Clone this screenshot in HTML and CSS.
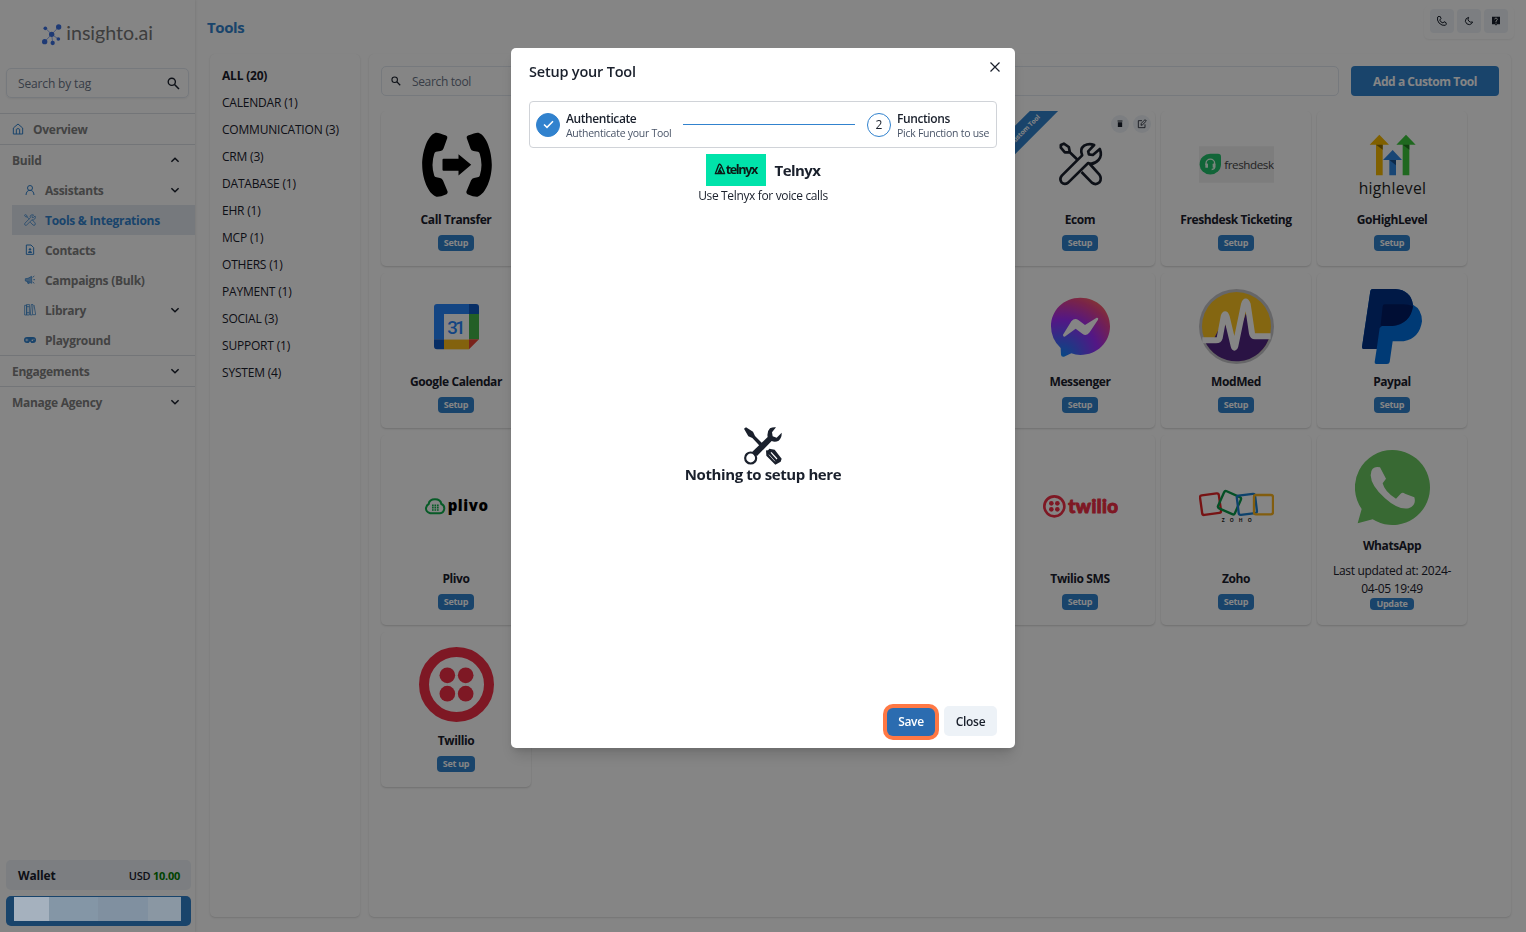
FILE: index.html
```html
<!DOCTYPE html>
<html lang="en">
<head>
<meta charset="utf-8">
<title>Tools</title>
<link rel="stylesheet" href="styles.css">
</head>
<body>
<svg class="defs" width="0" height="0" aria-hidden="true">
  <symbol id="chev" viewBox="0 0 10 10"><path d="M1.4 3.2 5 6.8 8.600 3.200" fill="none" stroke="currentColor" stroke-width="1.500"/></symbol>
  <symbol id="search" viewBox="0 0 38 38"><circle cx="14" cy="14" r="10.500" fill="none" stroke="currentColor" stroke-width="4"/><path d="M22 22 35 35" stroke="currentColor" stroke-width="4.500"/></symbol>
</svg>
<div class="app">
  <aside class="sidebar">
    <div class="logo">
      <svg width="112" height="24" viewBox="123 66 336 72">
        <path d="M136 84 155 103 176 81M155 103 134 125M155 103 158 128M155 103 175 117" fill="none" stroke="#7a9cf0" stroke-width="2.500"/>
        <g fill="#3b6fe0"><circle cx="136" cy="85" r="5.500"/><circle cx="176" cy="81" r="8"/><circle cx="155" cy="103" r="8"/><circle cx="134" cy="125" r="8"/><circle cx="158" cy="129" r="6.500"/><circle cx="175" cy="117" r="5.500"/></g>
        <text x="199" y="120" textLength="260" class="logo-text">insighto.ai</text>
      </svg>
    </div>
    <div class="field side-search"><span>Search by tag</span><svg width="13" height="13"><use href="#search"/></svg></div>
    <nav class="nav">
      <div class="row overview"><svg class="ic" width="12" height="12" viewBox="36 370 36 36"><path d="M40 385 54 373 68 385V403H40ZM49 403V390Q49 387 54 387T59 390V403" fill="none" stroke="currentColor" stroke-width="3"/></svg><span>Overview</span></div>
      <div class="group">
        <div class="row head"><span>Build</span><svg class="chev up" width="10" height="10"><use href="#chev"/></svg></div>
        <div class="row sub"><svg class="ic" width="12" height="12" viewBox="72 552 36 36"><circle cx="90" cy="564" r="7.500" fill="none" stroke="currentColor" stroke-width="3"/><path d="M78 585Q79 571 90 571T102 585" fill="none" stroke="currentColor" stroke-width="3"/></svg><span>Assistants</span><svg class="chev" width="10" height="10"><use href="#chev"/></svg></div>
        <div class="row sub active"><svg class="ic" width="12" height="12" viewBox="98 424 135 135"><use href="#toolsline" x="-45"/></svg><span>Tools &amp; Integrations</span></div>
        <div class="row sub"><svg class="ic" width="12" height="12" viewBox="72 133 36 36"><path d="M79 136H93L101 144V164H79Z" fill="none" stroke="currentColor" stroke-width="3"/><circle cx="90" cy="149" r="3.500" fill="currentColor"/><path d="M84 160Q84 154 90 154T96 160Z" fill="currentColor"/></svg><span>Contacts</span></div>
        <div class="row sub"><svg class="ic" width="12" height="12" viewBox="72 223 36 36"><path d="M76 237 84 236 95 230V251L85 246 76 244ZM81 245 84 252 88 251 86 245" fill="currentColor" fill-opacity=".6" stroke="currentColor" stroke-width="2"/><path d="M98 233 103 229M100 240H105M98 247 103 251" stroke="currentColor" stroke-width="2.500"/></svg><span>Campaigns (Bulk)</span></div>
        <div class="row sub"><svg class="ic" width="12" height="12" viewBox="72 313 36 36"><path d="M74 317H80V346H74ZM80 314H88V346H80ZM80 321H88M80 339H88M91 346 94 314 99 315 97 346ZM102 316 107 345H99" fill="none" stroke="currentColor" stroke-width="2.200"/></svg><span>Library</span><svg class="chev" width="10" height="10"><use href="#chev"/></svg></div>
        <div class="row sub"><svg class="ic" width="12" height="12" viewBox="72 402 36 36"><rect x="72" y="411" width="36" height="18" rx="9" fill="currentColor"/><path d="M76 420H85M80.500 416V424" stroke="#fff" stroke-width="2"/><path d="M86 429 90 424 94 429" fill="#fff"/><circle cx="97" cy="421" r="2.500" fill="#fff"/><circle cx="102" cy="418" r="1.500" fill="#fff"/></svg><span>Playground</span></div>
      </div>
      <div class="group"><div class="row head"><span>Engagements</span><svg class="chev" width="10" height="10"><use href="#chev"/></svg></div></div>
      <div class="row head"><span>Manage Agency</span><svg class="chev" width="10" height="10"><use href="#chev"/></svg></div>
    </nav>
    <div class="wallet"><b>Wallet</b><span class="amount">USD <em>10.00</em></span></div>
    <div class="account"><div class="blocks"><i></i><i></i><i></i><i></i></div></div>
  </aside>

  <main class="main">
    <header class="topbar">
      <h1>Tools</h1>
      <div class="actions">
        <span><svg width="10" height="10" viewBox="442 49 30 30" fill="none" stroke="#1a202c" stroke-width="3"><path d="M444 52Q448 48 452 51L454 57 450 61Q453 68 460 70L463 66 469 69Q472 74 467 77 457 79 448 70 441 61 444 52Z"/></svg></span>
        <span><svg width="10" height="10" viewBox="522 49 30 30" fill="none" stroke="#1a202c" stroke-width="3"><path d="M536 53Q526 55 526 65 529 75 538 75 545 74 548 67 540 69 536 64 532 59 536 53Z"/></svg></span>
        <span><svg width="10" height="10" viewBox="604 49 30 30"><path d="M607 51H631V74H622L619 78 616 74H607Z" fill="#1a202c"/><path d="M615 59Q616 55 619 55T623 59Q623 62 619 64V67M619 69V72" fill="none" stroke="#fff" stroke-width="2.500"/></svg></span>
      </div>
    </header>
    <div class="content">
      <section class="panel cats">
        <div class="on">ALL (20)</div><div>CALENDAR (1)</div><div>COMMUNICATION (3)</div><div>CRM (3)</div><div>DATABASE (1)</div><div>EHR (1)</div><div>MCP (1)</div><div>OTHERS (1)</div><div>PAYMENT (1)</div><div>SOCIAL (3)</div><div>SUPPORT (1)</div><div>SYSTEM (4)</div>
      </section>
      <section class="panel tools">
        <div class="bar"><div class="field tool-search"><svg width="10" height="10"><use href="#search"/></svg><span>Search tool</span></div><div class="add">Add a Custom Tool</div></div>
        <div class="grid">
          <div class="card"><div class="pic"><svg width="75" height="75" viewBox="0 0 75 75"><g id="handset"><path d="M16.500 5.800Q19 5.200 27 8.600 28.700 9.300 28.300 11L24.500 21.500Q23.800 23.600 21.500 24L17 24.800Q15.600 25 15.200 27 11.800 38 15.200 48.500 15.500 50 17.500 50.300L21 51Q23 51.400 24 53.500L28.600 64.500Q29 66.400 27.500 67.200 21 70 17.500 69.700C9 67 3.200 51 3.200 37.800S8.500 8.500 16.500 5.800Z"/></g><use href="#handset" transform="translate(76 0) scale(-1 1)"/><path d="M24.500 31.800H39.500V27.200L52.200 37.800 39.500 48.500V43.800H24.500Q23.500 43.800 23.500 42.800V32.800Q23.500 31.800 24.500 31.800Z"/></svg></div><h3>Call Transfer</h3><span class="badge">Setup</span></div>
          <div class="card"></div><div class="card"></div><div class="card"></div>
          <div class="card custom"><div class="ribbon">Custom Tool</div><div class="tiny"><span><svg width="8" height="8" viewBox="316 358 24 26"><path d="M320 360H336V363H320ZM321 365H335V381H321Z" fill="#1a202c"/></svg></span><span><svg width="10" height="10" viewBox="382 356 30 30" fill="none" stroke="#1a202c" stroke-width="2.500"><path d="M397 361H386V382H406V372M394 375 395 369 406 358 410 362 399 373Z"/></svg></span></div>
            <div class="pic"><svg width="75" height="75" viewBox="97.500 381 225 225"><g id="toolsline" fill="none" stroke="currentColor" stroke-width="8" stroke-linejoin="round"><path d="M151 435 160 431 175 441 178 457 163 457 151 443ZM177 456 202 480"/><path d="M215 466Q207 447 221 437 235 429 251 435L233 454 235 463 247 465 268 447Q276 467 264 480 249 496 233 489L173 548Q162 556 153 547 146 537 154 527Z"/><path d="M238 492 266 523Q275 536 267 547 256 557 244 548L213 516"/></g></svg></div><h3>Ecom</h3><span class="badge">Setup</span></div>
          <div class="card"><div class="pic"><svg width="75" height="37" viewBox="567 438 225 110"><path d="M567 438H792V548H567Z" fill="#f0f0f0"/><path d="M601 461H624Q633 461 633 470V492A32 31 0 1 1 601 461Z" fill="#22c16b"/><path d="M588 494V490A13 13 0 0 1 614 490V500Q614 508 605 508" fill="none" stroke="#e8fff0" stroke-width="4"/><rect x="586" y="490" width="8" height="13" rx="2" fill="#e8fff0"/><rect x="608" y="490" width="8" height="13" rx="2" fill="#e8fff0"/><text x="643" y="506" textLength="149" class="fresh">freshdesk</text></svg></div><h3>Freshdesk Ticketing</h3><span class="badge">Setup</span></div>
          <div class="card"><div class="pic"><svg width="75" height="75" viewBox="195 381 225 225"><path d="M268 404 297 434H278V526H258V434H239Z" fill="#f5b800"/><path d="M348 404 377 434H358V526H338V434H319Z" fill="#3cc83c"/><path d="M308 450 336 480H318V526H298V480H279Z" fill="#2f86e0"/><path d="M258 434H278V449Z" fill="#8b6a00"/><path d="M338 434H358V449Z" fill="#207a20"/><path d="M298 480H318V496Z" fill="#174f8c"/><text x="206" y="583" textLength="202" class="ghl">highlevel</text></svg></div><h3>GoHighLevel</h3><span class="badge">Setup</span></div>

          <div class="card"><div class="pic"><svg width="75" height="75" viewBox="147 56 225 225"><path d="M201 101H297V131H222V207H192V110Q192 101 201 101Z" fill="#2684fc"/><path d="M297 101H318Q327 101 327 110V131H297ZM192 207H222V237H201Q192 237 192 228Z" fill="#0e58c4"/><path d="M297 131H327V207H297Z" fill="#43b649"/><path d="M222 207H297V237H222Z" fill="#fbbc1c"/><path d="M297 207H327L297 237Z" fill="#ea4335"/><path d="M222 131H297V207H222Z" fill="#fff"/><text x="232" y="190" textLength="55" class="gcal">31</text></svg></div><h3>Google Calendar</h3><span class="badge">Setup</span></div>
          <div class="card"></div><div class="card"></div><div class="card"></div>
          <div class="card"><div class="pic"><svg width="75" height="75" viewBox="99 57 225 225"><defs><radialGradient id="mg" cx=".18" cy="1" r="1.150"><stop offset="0" stop-color="#0a8cff"/><stop offset=".55" stop-color="#a02cff"/><stop offset=".85" stop-color="#e8448c"/><stop offset="1" stop-color="#ff6a60"/></radialGradient></defs><path d="M211 83C262 83 300 121 300 169S262 255 211 255Q196 255 184 250L162 260Q154 262 153 254L152 234Q123 208 123 169C123 121 161 83 211 83Z" fill="url(#mg)"/><path d="M159 194 184 154Q194 142 206 151L225 165 260 143Q267 142 264 149L239 187Q229 200 217 191L197 176 164 200Q158 200 159 194Z" fill="#fff"/></svg></div><h3>Messenger</h3><span class="badge">Setup</span></div>
          <div class="card"><div class="pic"><svg width="75" height="75" viewBox="567 57 225 225"><circle cx="679.500" cy="169.500" r="112.500" fill="#c4c4c8"/><circle cx="679.500" cy="169.500" r="103.500" fill="#fdc421"/><path d="M583 210H610L640 150 672 225 708 130 730 195H780A104 104 0 0 1 583 210Z" fill="#512583"/><path d="M577 211H618Q627 211 629 204L641 140Q645 126 650 140L671 228Q673 238 676 228L702 103Q707 86 713 103L726 190Q728 199 735 199H782" fill="none" stroke="#fff" stroke-width="18"/></svg></div><h3>ModMed</h3><span class="badge">Setup</span></div>
          <div class="card"><div class="pic"><svg width="75" height="75" viewBox="1035 57 225 225"><path d="M1088 57H1156Q1202 60 1209 104 1236 118 1236 154 1229 205 1181 214H1148L1139 276Q1138 282 1131 282H1099Q1093 282 1094 276L1100 237H1061Q1056 237 1056 231L1081 63Q1082 57 1088 57Z" fill="#0070e0"/><path d="M1088 57H1156Q1202 60 1209 104 1201 163 1146 168H1116L1109 174 1100 237H1061Q1056 237 1056 231L1081 63Q1082 57 1088 57Z" fill="#003087"/><path d="M1124 103H1180Q1196 103 1209 109 1203 160 1147 168H1117Q1111 168 1112 164L1118 109Q1119 103 1124 103Z" fill="#001c64"/></svg></div><h3>Paypal</h3><span class="badge">Setup</span></div>

          <div class="card"><div class="pic"><svg width="75" height="75" viewBox="147 -7 225 225"><path d="M179 125Q167 121 168 110 170 101 176 98 178 84 195 84T214 98Q223 101 223 112 221 125 210 126H181Z" fill="none" stroke="#0fae4c" stroke-width="6"/><path d="M186 102H206M186 109H206M186 116H206" stroke="#0fae4c" stroke-width="5" stroke-dasharray="5 2.500"/><text x="233" y="118" textLength="121" class="plivo">plivo</text></svg></div><h3>Plivo</h3><span class="badge">Setup</span></div>
          <div class="card"></div><div class="card"></div><div class="card"></div>
          <div class="card"><div class="pic"><svg width="75" height="75" viewBox="99 99 225 225"><circle cx="133" cy="211" r="30" fill="none" stroke="#f22f46" stroke-width="8"/><g fill="#f22f46"><circle cx="124" cy="202" r="7"/><circle cx="142" cy="202" r="7"/><circle cx="124" cy="220" r="7"/><circle cx="142" cy="220" r="7"/><text x="175" y="232" textLength="149" class="twl">twilio</text></g></svg></div><h3>Twilio SMS</h3><span class="badge">Setup</span></div>
          <div class="card"><div class="pic"><svg width="75" height="75" viewBox="567 99 225 225"><g fill="none" stroke-width="7"><rect x="573" y="175" width="57" height="59" rx="6" stroke="#e42527" transform="rotate(-8 601 204)"/><rect x="631" y="172" width="55" height="56" rx="6" stroke="#089949" transform="rotate(24 658 200)"/><rect x="683" y="176" width="55" height="58" rx="6" stroke="#1b7fd0" transform="rotate(-7 711 204)"/><rect x="732" y="177" width="57" height="58" rx="6" stroke="#f9b21d"/></g><text x="635" y="257" textLength="90" class="zoho">ZOHO</text></svg></div><h3>Zoho</h3><span class="badge">Setup</span></div>
          <div class="card wa"><div class="pic"><svg width="75" height="75" viewBox="1035 42 225 225"><path d="M1147 42A112.500 112.500 0 1 1 1088 250L1043 262 1055 219A112.500 112.500 0 0 1 1147 42Z" fill="#6bc962"/><path d="M1088 98Q1096 90 1110 94L1128 128 1118 142Q1124 168 1158 188L1172 173Q1178 168 1185 173L1213 184Q1220 208 1196 217 1165 223 1125 187 1083 150 1082 118 1082 104 1088 98Z" fill="#fff"/></svg></div><h3>WhatsApp</h3><p>Last updated at: 2024-<br>04-05 19:49</p><span class="badge">Update</span></div>

          <div class="card last"><div class="pic"><svg width="75" height="75" viewBox="147 528 225 225"><circle cx="259.500" cy="640.500" r="97.500" fill="none" stroke="#f22f46" stroke-width="30"/><g fill="#f22f46"><circle cx="232" cy="613" r="23.500"/><circle cx="287" cy="613" r="23.500"/><circle cx="232" cy="668" r="23.500"/><circle cx="287" cy="668" r="23.500"/></g></svg></div><h3>Twillio</h3><span class="badge">Set up</span></div>
        </div>
      </section>
    </div>
  </main>
</div>

<div class="overlay">
  <div class="modal">
    <div class="mhead"><h2>Setup your Tool</h2><svg width="10" height="10" viewBox="0 0 10 10"><path d="M.5 .5 9.500 9.500M9.500 .5 .5 9.500" stroke="#1a202c" stroke-width="1.200"/></svg></div>
    <div class="stepper">
      <div class="circle done"><svg width="11" height="9" viewBox="0 0 11 9"><path d="M1 4.500 4 7.400 10 1.300" fill="none" stroke="#fff" stroke-width="1.500"/></svg></div>
      <div class="step"><b>Authenticate</b><span>Authenticate your Tool</span></div>
      <div class="line"></div>
      <div class="circle">2</div>
      <div class="step two"><b>Functions</b><span>Pick Function to use</span></div>
    </div>
    <div class="tool"><svg width="60" height="32" viewBox="138 312 180 96"><path d="M138 312H318V408H138Z" fill="#00e3aa"/><path d="M166 371 176 345Q179 340 183 346L194 371ZM173 371 182 352M180 371V360L187 371" fill="none" stroke="#0b1a16" stroke-width="4" stroke-linejoin="round"/><text x="197" y="371" textLength="98" class="tel">telnyx</text></svg><h4>Telnyx</h4></div>
    <p class="desc">Use Telnyx for voice calls</p>
    <div class="empty"><svg width="38" height="38" viewBox="252 50 114 114"><path d="M252 55 258 51 279 64 285 77 316 108 308 116 277 83 265 78Z" fill="#1a202c"/><circle cx="272" cy="143" r="16.500" fill="none" stroke="#1a202c" stroke-width="6.500"/><path d="M277 124 323 80Q320 64 330 54 338 50 348 51L336 66 338 78 350 82 365 67Q366 83 356 91 345 97 335 92L291 137Z" fill="#1a202c"/><path d="M318 120Q325 122 328 115L344 118 365 145 362 154 346 163 319 136Z" fill="#1a202c"/><path d="M333 126 351 146" stroke="#fff" stroke-width="3.500"/><path d="M327 133 345 153" stroke="#fff" stroke-width="2"/></svg><strong>Nothing to setup here</strong></div>
    <div class="foot"><div class="save">Save</div><div class="close">Close</div></div>
  </div>
</div>
</body>
</html>
```
FILE: styles.css
```css
* { box-sizing: border-box; }
body { margin: 0; width: 1526px; height: 932px; overflow: hidden; background: #fff; color: #1a202c; font: 12px/18px "Open Sans", "Noto Sans", sans-serif; letter-spacing: -.1px; }
h1, h2, h3, h4, p { margin: 0; }
svg { display: block; flex: none; }
.defs { position: absolute; }
.app { display: flex; height: 932px; }

.sidebar { width: 195px; flex: none; display: flex; flex-direction: column; box-shadow: 0 0 3px rgba(0,0,0,.15); }
.logo { padding: 22px 0 0 41px; height: 68px; }
.logo-text { font: 400 59px Lato, sans-serif; fill: #777; letter-spacing: 0; }
.field { display: flex; align-items: center; height: 30px; border: 1px solid #e2e8f0; border-radius: 5px; color: #6b7587; }
.field span { padding-top: 2px; }
.side-search { margin: 0 6px; width: 183px; padding: 0 8px 0 11px; justify-content: space-between; box-shadow: 0 1px 2px rgba(0,0,0,.06); letter-spacing: -.15px; }
.side-search svg, .tool-search svg { color: #1a202c; }
.nav { margin-top: 15px; font-weight: 700; color: #808080; letter-spacing: -.28px; }
.nav span { padding-top: 2px; }
.row { display: flex; align-items: center; height: 30px; }
.overview { border-top: 1px solid #dde1e6; height: 31px; padding-left: 12px; gap: 9px; }
.ic { color: #3182ce; }
.head { padding: 0 15px 0 12px; justify-content: space-between; }
.group { border-top: 1px solid #dde1e6; border-bottom: 1px solid #dde1e6; }
.group + .group { border-top: 0; }
.sub { margin-left: 12px; padding: 0 15px 0 12px; gap: 9px; }
.sub .chev { margin-left: auto; }
.chev { color: #1a202c; }
.chev.up { transform: rotate(180deg); }
.active { background: #e2e8f0; color: #3182ce; }
.wallet { margin: auto 4px 6px 6px; height: 30px; flex: none; border-radius: 5px; background: #edf2f7; display: flex; align-items: center; justify-content: space-between; padding: 1px 11px 0 12px; letter-spacing: -.15px; }
.amount { font-size: 11px; font-weight: 600; letter-spacing: -.25px; }
.amount em { font-style: normal; font-weight: 700; color: #008000; }
.account { margin: 0 4px 6px 6px; height: 30px; flex: none; background: #3182ce; border-radius: 5px; padding: 1px 8px; }
.blocks { position: relative; z-index: 20; display: grid; grid-template-columns: 35px 49px 50px 33px; height: 24px; }
.blocks i { background: #8496a6; }
.blocks i:nth-child(1) { background: #a5b1be; }
.blocks i:nth-child(3) { background: #8090a0; }
.blocks i:nth-child(4) { background: #8a97a3; }

.main { flex: 1; padding: 6px 12px 0 12px; }
.topbar { display: flex; justify-content: space-between; height: 48px; }
h1 { margin-top: 9px; font-size: 15px; line-height: 24px; color: #3182ce; letter-spacing: -.4px; }
.actions { display: flex; gap: 3px; height: 33px; padding: 3px 6px; border-radius: 5px; box-shadow: 0 1px 2px rgba(0,0,0,.06); }
.actions span { width: 24px; height: 24px; border-radius: 4px; background: #edf2f7; display: grid; place-items: center; }
.content { display: flex; gap: 9px; padding-left: 3px; }
.panel { height: 863px; border-radius: 5px; box-shadow: 0 1px 2px rgba(0,0,0,.13), 0 0 1px rgba(0,0,0,.06); }
.cats { width: 150px; padding: 8px 12px; line-height: 27px; letter-spacing: -.2px; white-space: nowrap; }
.on { font-weight: 700; }
.tools { width: 1142px; padding: 12px; }
.bar { display: flex; gap: 12px; margin-bottom: 15px; }
.tool-search { width: 958px; padding-left: 9px; gap: 11px; letter-spacing: -.35px; }
.add { width: 148px; height: 30px; padding-top: 2px; border-radius: 4px; background: #3182ce; color: #fff; display: grid; place-items: center; font-weight: 700; letter-spacing: -.45px; }
.grid { display: grid; grid-template-columns: repeat(7, 150px); grid-template-rows: 155px 155px 190px 155px; gap: 7px 6px; }
.card { position: relative; display: flex; flex-direction: column; align-items: center; padding: 8px 0 15px; border-radius: 5px; box-shadow: 0 1px 2px rgba(0,0,0,.17); clip-path: inset(0 -1px -3px -1px); }
.pic { flex: 1; display: grid; place-items: center; }
h3 { font-size: 12px; line-height: 20px; font-weight: 700; letter-spacing: -.4px; }
.badge { margin-top: 5px; height: 16px; line-height: 16px; padding: 0 6px; border-radius: 4px; background: #3182ce; color: #fff; font-size: 9px; font-weight: 700; letter-spacing: -.3px; }
.custom { clip-path: inset(0 -1px -3px 0); }
.ribbon { position: absolute; left: -40px; top: 9px; width: 120px; height: 20px; transform: rotate(-45deg); background: #3182ce; color: #fff; text-align: center; font-size: 6.5px; line-height: 20px; font-weight: 700; }
.tiny { position: absolute; right: 4px; top: 4px; display: flex; gap: 4px; }
.tiny span { width: 18px; height: 18px; border-radius: 50%; background: #edf2f7; display: grid; place-items: center; }
.wa p { margin-top: 6px; text-align: center; line-height: 18px; letter-spacing: -.3px; }
.wa .pic { padding-bottom: 5px; }
.wa .badge { margin-top: 0; height: 12px; line-height: 12px; }
.last .pic { padding-bottom: 2px; }
.fresh { font: 35px "Open Sans", sans-serif; fill: #444; letter-spacing: 0; }
.ghl { font: 500 47px "Open Sans", sans-serif; fill: #222; letter-spacing: 0; }
.gcal { font: 500 56px Roboto, sans-serif; fill: #2684fc; letter-spacing: 0; }
.plivo { font: 800 45px "Open Sans", sans-serif; letter-spacing: 0; }
.twl { font: 900 56px Lato, sans-serif; stroke: #f22f46; stroke-width: 3px; letter-spacing: 0; }
.zoho { font: 700 15px "Open Sans", sans-serif; fill: #222; letter-spacing: 0; }

.overlay { position: fixed; inset: 0; z-index: 10; background: rgba(0,0,0,.48); display: flex; justify-content: center; align-items: flex-start; padding-top: 48px; }
.modal { width: 504px; height: 700px; background: #fff; border-radius: 5px; box-shadow: 0 10px 15px -3px rgba(0,0,0,.15), 0 4px 6px -2px rgba(0,0,0,.1); display: flex; flex-direction: column; padding: 12px 18px; }
.mhead { display: flex; justify-content: space-between; height: 41px; }
.mhead svg { margin: 2px -3px 0 0; }
h2 { font-size: 14.5px; line-height: 24px; font-weight: 600; letter-spacing: -.2px; }
.stepper { height: 47px; flex: none; border: 1px solid #d0d3d8; border-radius: 4px; display: flex; align-items: center; padding: 0 6px; }
.circle { width: 24px; height: 24px; flex: none; border: 1px solid #3182ce; border-radius: 50%; display: grid; place-items: center; }
.done { background: #3182ce; }
.step { margin-left: 6px; padding-top: 2px; display: flex; flex-direction: column; line-height: 15px; width: 105px; white-space: nowrap; }
.step b { font-weight: 600; letter-spacing: -.4px; }
.step span { font-size: 10.5px; color: #4a5568; letter-spacing: -.27px; }
.step.two { width: 93px; }
.line { flex: 1; height: 1px; background: #3182ce; margin: 0 12px; }
.tool { display: flex; justify-content: center; align-items: center; gap: 9px; margin-top: 6px; }
.tel { font: 700 38px "Open Sans", sans-serif; fill: #0b1a16; letter-spacing: 0; }
h4 { font-size: 15px; letter-spacing: -.55px; }
.desc { text-align: center; margin-top: 1px; letter-spacing: -.35px; }
.empty { flex: 1; display: flex; flex-direction: column; align-items: center; justify-content: center; }
.empty strong { font-size: 15px; line-height: 20px; letter-spacing: -.4px; margin-top: -1px; }
.foot { display: flex; justify-content: flex-end; align-items: center; gap: 9px; }
.save, .close { height: 30px; padding-top: 2px; display: grid; place-items: center; border-radius: 5px; font-weight: 600; letter-spacing: -.3px; }
.save { position: relative; top: 1px; width: 48px; height: 28px; padding-top: 0; background: #2b6cb0; color: #fff; border-radius: 6px; box-shadow: 0 0 0 4px #ff7844; }
.close { width: 53px; background: #edf2f7; }
```
